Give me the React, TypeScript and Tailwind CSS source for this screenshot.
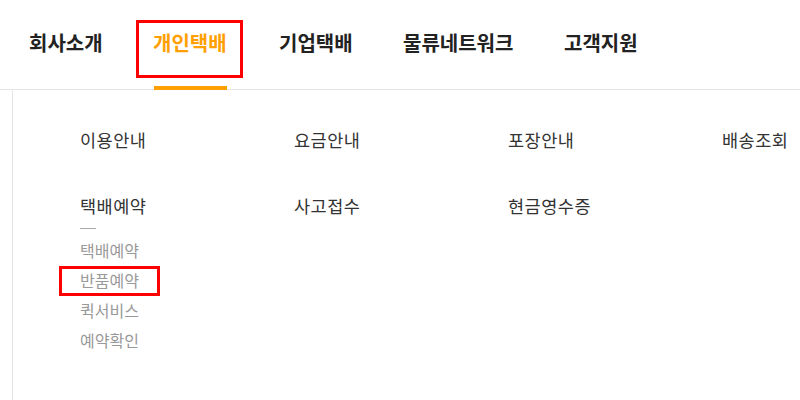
import React from 'react';

const navItems = [
  { label: '회사소개', w: 'w-[124px]' },
  { label: '개인택배', w: 'w-[126px]' },
  { label: '기업택배', w: 'w-[124px]' },
  { label: '물류네트워크', w: 'w-[161px]' },
  { label: '고객지원', w: 'w-[120px]' },
];

const menuRows = [
  ['이용안내', '요금안내', '포장안내', '배송조회'],
  ['택배예약', '사고접수', '현금영수증'],
];

const subItems = ['택배예약', '반품예약', '퀵서비스', '예약확인'];

const font = { fontFamily: '"Noto Sans CJK KR", "Noto Sans", sans-serif' };

export default function App() {
  return (
    <div className="w-[800px] h-[400px] bg-white overflow-hidden" style={font}>
      {/* top nav */}
      <div className="h-[90px] border-b border-[#e5e5e5]">
        <ul className="flex pl-[29px] pt-[30px]">
          {navItems.map((item, i) => (
            <li
              key={item.label}
              className={`relative shrink-0 ${item.w} text-[20px] leading-[26px] font-bold ${i === 1 ? 'text-[#ffa000]' : 'text-[#222]'}`}
            >
              {item.label}
              {i === 1 && (
                <>
                  <span className="absolute left-[-17px] top-[-10px] w-[107px] h-[58px] border-[3px] border-[#ff0000]" />
                  <span className="absolute left-[1px] top-[56px] w-[73px] h-[4px] bg-[#ffa000]" />
                </>
              )}
            </li>
          ))}
        </ul>
      </div>

      {/* dropdown panel */}
      <div className="ml-[12px] h-[310px] border-l border-[#e5e5e5] pl-[67px] pt-[37px]">
        <div className="flex flex-col gap-[40px]">
          {menuRows.map((row, r) => (
            <div key={r} className="flex">
              {row.map((label, c) => (
                <div key={label} className="w-[214px] shrink-0">
                  <div className="text-[17.5px] leading-[26px] tracking-[0.5px] text-[#333]">{label}</div>
                  {r === 1 && c === 0 && (
                    <div>
                      <div className="mt-[9px] w-[16px] h-px bg-[#aaa]" />
                      <ul className="mt-[6px]">
                        {subItems.map((s, k) => (
                          <li key={s} className="relative text-[16px] leading-[30px] text-[#999]">
                            {s}
                            {k === 1 && (
                              <span className="absolute left-[-21px] top-[1px] w-[101px] h-[30px] border-[3px] border-[#ff0000]" />
                            )}
                          </li>
                        ))}
                      </ul>
                    </div>
                  )}
                </div>
              ))}
            </div>
          ))}
        </div>
      </div>
    </div>
  );
}
